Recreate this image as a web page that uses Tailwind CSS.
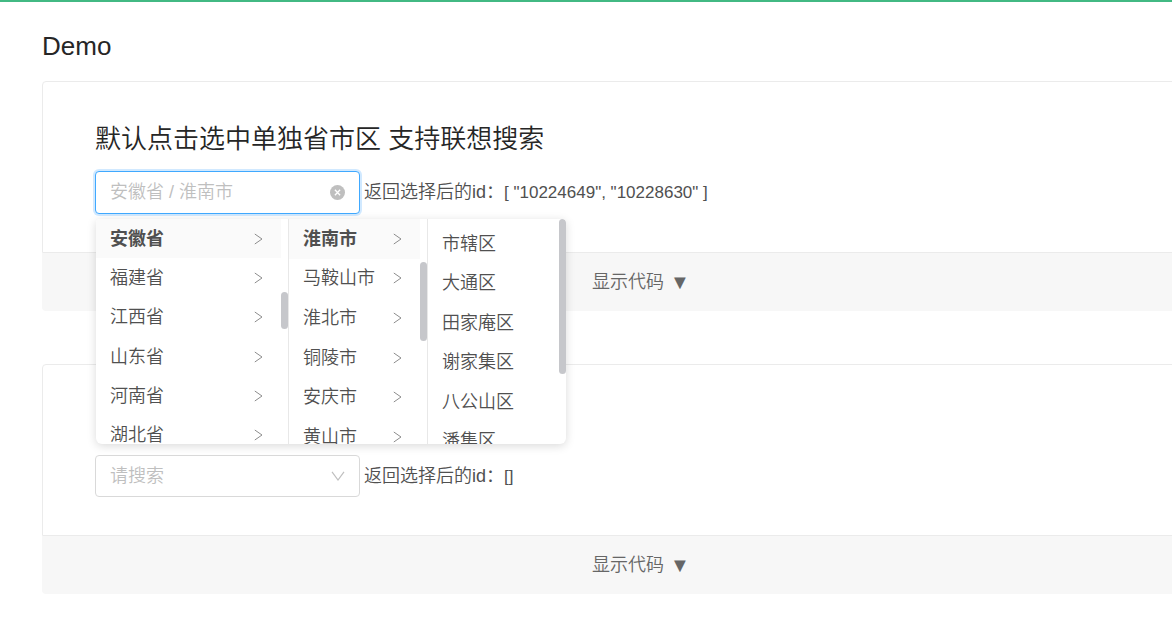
<!DOCTYPE html>
<html lang="zh-CN">
<head>
<meta charset="utf-8">
<meta name="viewport" content="width=device-width, initial-scale=1">
<title>Demo</title>
<script src="https://cdn.jsdelivr.net/npm/@tailwindcss/browser@4"></script>
</head>
<body class="min-h-screen overflow-x-hidden border-t-2 border-[#42b983] bg-white font-['Liberation_Sans','Noto_Sans_CJK_SC',sans-serif] text-lg font-[350] text-[#505050]">
<svg class="hidden" aria-hidden="true">
  <symbol id="chevron" viewBox="0 0 9 12"><path d="M0.8 1 L8 6 L0.8 11" fill="none" stroke="currentColor" stroke-width="1"/></symbol>
</svg>
<main class="pl-[42px]">
  <h2 class="pt-6 text-[26px] leading-10 font-normal text-[#262626]">Demo</h2>

  <!-- Cards run past the right edge of the window -->
  <section class="mt-[15px] -mr-[68px]">
    <div class="rounded-t border border-[#ebebeb] px-[52px] pt-[37px] pb-[38px]">
      <h3 class="text-[26px] leading-10 text-[#262626]">默认点击选中单独省市区 支持联想搜索</h3>
      <div class="mt-3 flex items-center gap-1">
        <div class="relative w-[265px]">
          <input id="region" type="text" placeholder="安徽省 / 淮南市" aria-label="省市区" class="block h-[43px] w-full rounded border border-[#40a9ff] bg-white pr-10 pl-[14px] shadow-[0_0_0_2px_rgba(24,144,255,0.2)] outline-none placeholder:text-[#bfbfbf]">
          <button type="button" aria-label="清除" class="absolute inset-y-0 right-[15px] my-auto size-[15px]">
            <svg viewBox="0 0 15 15" class="size-full"><circle cx="7.5" cy="7.5" r="7.5" fill="#bfbfbf"/><path d="M4.9 4.7 L10.1 10.3 M10.1 4.7 L4.9 10.3" stroke="#fff" stroke-width="1.3"/></svg>
          </button>

          <div class="absolute top-12 left-px z-10 flex h-[225px] w-[470px] overflow-hidden rounded-md rounded-t-sm bg-white shadow-[0_2px_10px_rgba(0,0,0,0.15)]">
            <div class="relative w-[193px] shrink-0 border-r border-[#e8e8e8] pr-[7px]">
              <ul class="grid h-[236px] grid-rows-6">
                <li class="flex bg-[#fafafa] font-bold"><button type="button" class="flex w-full items-center justify-between pr-[18px] pl-[14px]">安徽省<svg class="h-3 w-[9px] text-[#8c8c8c]"><use href="#chevron"/></svg></button></li>
                <li class="flex"><button type="button" class="flex w-full items-center justify-between pr-[18px] pl-[14px]">福建省<svg class="h-3 w-[9px] text-[#8c8c8c]"><use href="#chevron"/></svg></button></li>
                <li class="flex"><button type="button" class="flex w-full items-center justify-between pr-[18px] pl-[14px]">江西省<svg class="h-3 w-[9px] text-[#8c8c8c]"><use href="#chevron"/></svg></button></li>
                <li class="flex"><button type="button" class="flex w-full items-center justify-between pr-[18px] pl-[14px]">山东省<svg class="h-3 w-[9px] text-[#8c8c8c]"><use href="#chevron"/></svg></button></li>
                <li class="flex"><button type="button" class="flex w-full items-center justify-between pr-[18px] pl-[14px]">河南省<svg class="h-3 w-[9px] text-[#8c8c8c]"><use href="#chevron"/></svg></button></li>
                <li class="flex"><button type="button" class="flex w-full items-center justify-between pr-[18px] pl-[14px]">湖北省<svg class="h-3 w-[9px] text-[#8c8c8c]"><use href="#chevron"/></svg></button></li>
              </ul>
              <div class="absolute top-[73px] right-0 h-[37px] w-[7px] rounded-full bg-[#c6c7cb]"></div>
            </div>
            <div class="relative w-[139px] shrink-0 border-r border-[#e8e8e8] pr-[7px]">
              <ul class="grid h-[238px] grid-rows-6">
                <li class="flex bg-[#fafafa] font-bold"><button type="button" class="flex w-full items-center justify-between pr-[18px] pl-[14px]">淮南市<svg class="h-3 w-[9px] text-[#8c8c8c]"><use href="#chevron"/></svg></button></li>
                <li class="flex"><button type="button" class="flex w-full items-center justify-between pr-[18px] pl-[14px]">马鞍山市<svg class="h-3 w-[9px] text-[#8c8c8c]"><use href="#chevron"/></svg></button></li>
                <li class="flex"><button type="button" class="flex w-full items-center justify-between pr-[18px] pl-[14px]">淮北市<svg class="h-3 w-[9px] text-[#8c8c8c]"><use href="#chevron"/></svg></button></li>
                <li class="flex"><button type="button" class="flex w-full items-center justify-between pr-[18px] pl-[14px]">铜陵市<svg class="h-3 w-[9px] text-[#8c8c8c]"><use href="#chevron"/></svg></button></li>
                <li class="flex"><button type="button" class="flex w-full items-center justify-between pr-[18px] pl-[14px]">安庆市<svg class="h-3 w-[9px] text-[#8c8c8c]"><use href="#chevron"/></svg></button></li>
                <li class="flex"><button type="button" class="flex w-full items-center justify-between pr-[18px] pl-[14px]">黄山市<svg class="h-3 w-[9px] text-[#8c8c8c]"><use href="#chevron"/></svg></button></li>
              </ul>
              <div class="absolute top-[43px] right-0 h-[79px] w-[7px] rounded-full bg-[#c6c7cb]"></div>
            </div>
            <div class="relative flex-1 pt-[5px] pr-[7px]">
              <ul class="grid h-[237px] grid-rows-6">
                <li class="flex"><button type="button" class="w-full pl-[14px] text-left">市辖区</button></li>
                <li class="flex"><button type="button" class="w-full pl-[14px] text-left">大通区</button></li>
                <li class="flex"><button type="button" class="w-full pl-[14px] text-left">田家庵区</button></li>
                <li class="flex"><button type="button" class="w-full pl-[14px] text-left">谢家集区</button></li>
                <li class="flex"><button type="button" class="w-full pl-[14px] text-left">八公山区</button></li>
                <li class="flex"><button type="button" class="w-full pl-[14px] text-left">潘集区</button></li>
              </ul>
              <div class="absolute top-0 right-0 h-[155px] w-[7px] rounded-full bg-[#c6c7cb]"></div>
            </div>
          </div>
        </div>
        <p>返回选择后的id：<span class="text-[17px]">[ "10224649", "10228630" ]</span></p>
      </div>
    </div>
    <button type="button" class="flex h-[58px] w-full items-center justify-center gap-[6px] rounded-b bg-[#f7f7f7] text-[#666]">显示代码 <span class="text-xl">▼</span></button>
  </section>

  <section class="mt-[53px] -mr-[68px]">
    <div class="rounded-t border border-[#ebebeb] px-[52px] pt-[90px] pb-[38px]">
      <div class="flex items-center gap-1">
        <div class="relative w-[265px]">
          <input id="region-search" type="text" placeholder="请搜索" aria-label="搜索省市区" class="block h-[42px] w-full rounded border border-[#d9d9d9] bg-white pr-10 pl-[14px] outline-none placeholder:text-[#bfbfbf]">
          <button type="button" aria-label="展开" class="absolute inset-y-0 right-[15px] my-auto h-[10px] w-[14px]">
            <svg viewBox="0 0 14 10" class="size-full"><path d="M1 0.8 L7 9 L13 0.8" fill="none" stroke="#bfbfbf" stroke-width="1.2"/></svg>
          </button>
        </div>
        <p>返回选择后的id：<span class="text-[17px]">[]</span></p>
      </div>
    </div>
    <button type="button" class="flex h-[58px] w-full items-center justify-center gap-[6px] rounded-b bg-[#f7f7f7] text-[#666]">显示代码 <span class="text-xl">▼</span></button>
  </section>
</main>
</body>
</html>
